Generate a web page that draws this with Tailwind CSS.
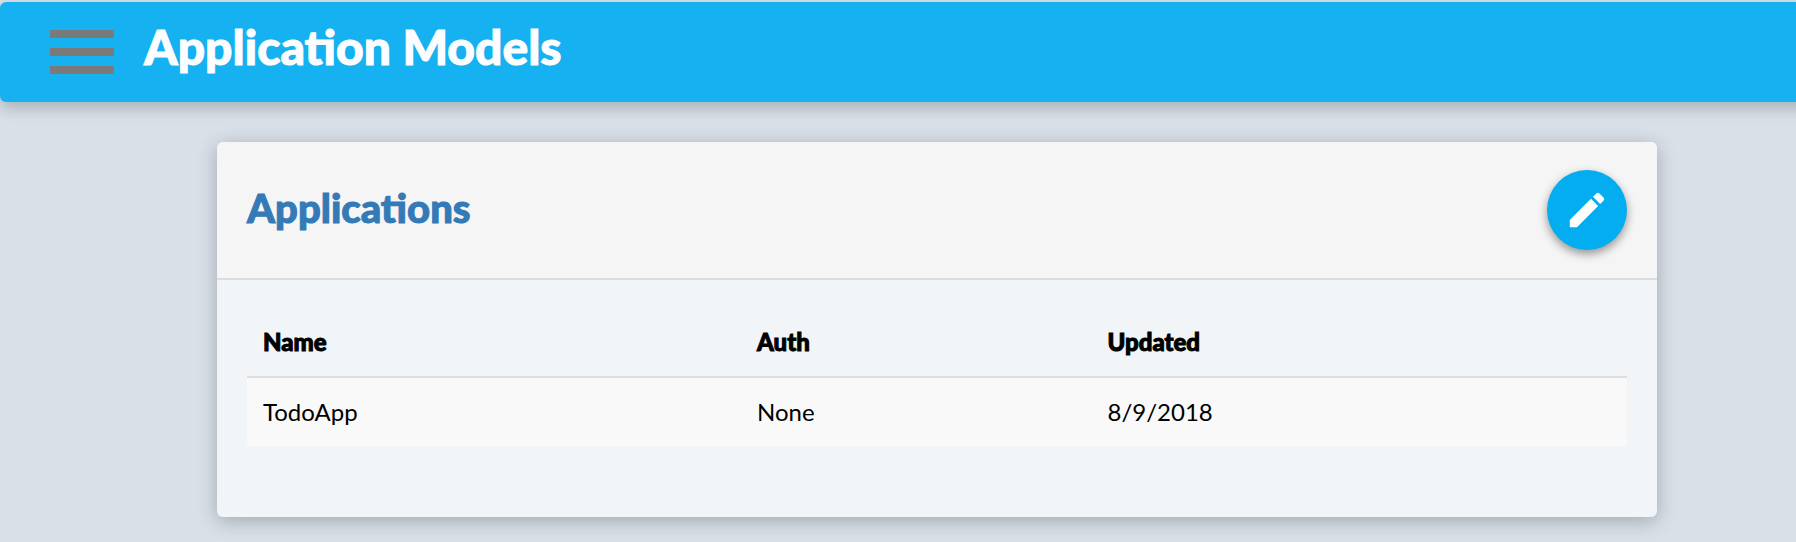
<!DOCTYPE html>
<html lang="en">
<head>
<meta charset="utf-8">
<meta name="viewport" content="width=device-width, initial-scale=1">
<title>Application Models</title>
<script src="https://cdn.jsdelivr.net/npm/@tailwindcss/browser@4"></script>
</head>
<body class="min-h-screen overflow-x-hidden bg-[#d9e0e8] pt-0.5 font-['Lato',sans-serif] text-black">
  <header class="-mr-8 flex items-center gap-[30px] rounded-md bg-[#16b1f0] px-[50px] pt-3.5 pb-[22px] shadow-[0_6px_16px_rgba(0,0,0,0.22)]">
    <button type="button" aria-label="Menu" class="flex flex-col gap-2.5 pt-2">
      <span class="h-2 w-16 bg-[#7a7a7a]"></span>
      <span class="h-2 w-16 bg-[#7a7a7a]"></span>
      <span class="h-2 w-16 bg-[#7a7a7a]"></span>
    </button>
    <h1 class="pb-0.5 font-['Lato_Black','Lato',sans-serif] text-[48px] leading-[62px] font-black text-[#fcfdff] [-webkit-text-stroke:1px_#fcfdff]">Application Models</h1>
  </header>
  <main class="pt-10 pr-[139px] pb-6 pl-[217px]">
    <section class="overflow-hidden rounded-md bg-[#f1f5f8] shadow-[0_4px_20px_rgba(0,0,0,0.25)]">
      <div class="flex items-center justify-between border-b-2 border-[#dddddd] bg-[#f5f5f5] px-[30px] py-7">
        <h2 class="pb-1 font-['Lato_Black','Lato',sans-serif] text-[40px] leading-[52px] font-black text-[#337ab7] [-webkit-text-stroke:1px_#337ab7]">Applications</h2>
        <button type="button" aria-label="Edit applications" class="flex size-20 items-center justify-center rounded-full bg-[#03adf0] text-white shadow-[0_4px_10px_rgba(0,0,0,0.4)]">
          <svg class="size-[46px]" viewBox="0 0 24 24" fill="currentColor" aria-hidden="true"><path d="M3 17.25V21h3.75L17.81 9.94l-3.75-3.75L3 17.25zM20.71 7.04c.39-.39.39-1.02 0-1.41l-2.34-2.34c-.39-.39-1.02-.39-1.41 0l-1.83 1.83 3.75 3.75 1.83-1.83z"/></svg>
        </button>
      </div>
      <div class="px-[30px] pt-7 pb-[71px]">
        <table class="w-full table-fixed border-collapse text-left text-2xl leading-9">
          <colgroup>
            <col class="w-[35.8%]">
            <col class="w-[25.4%]">
            <col>
          </colgroup>
          <thead class="font-['Lato_Black','Lato',sans-serif] [-webkit-text-stroke:1px_#000]">
            <tr class="border-b-2 border-[#dddddd]">
              <th scope="col" class="px-4 py-4 font-black">Name</th>
              <th scope="col" class="px-4 py-4 font-black">Auth</th>
              <th scope="col" class="px-4 py-4 font-black">Updated</th>
            </tr>
          </thead>
          <tbody>
            <tr class="bg-[#f9f9f9]">
              <td class="px-4 py-4">TodoApp</td>
              <td class="px-4 py-4">None</td>
              <td class="px-4 py-4">8/9/2018</td>
            </tr>
          </tbody>
        </table>
      </div>
    </section>
  </main>
</body>
</html>
